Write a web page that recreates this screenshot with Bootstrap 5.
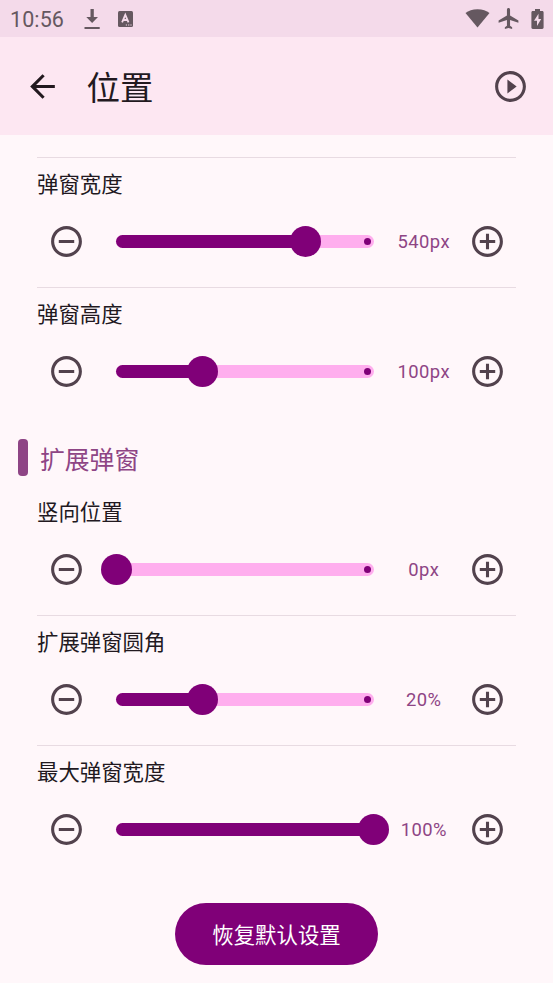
<!DOCTYPE html>
<html lang="zh-CN">
<head>
<meta charset="utf-8">
<meta name="viewport" content="width=device-width, initial-scale=1">
<title>位置</title>
<link href="https://cdn.jsdelivr.net/npm/bootstrap@5.3.0/dist/css/bootstrap.min.css" rel="stylesheet">
<style>
  :root { --plum: #800078; --mauve: #8e4585; --ink: #22191f; --icon: #52424d; }
  body { background: #fff7fa; color: var(--ink); font-family: Roboto, "Noto Sans CJK SC", sans-serif; min-height: 983px; overflow: hidden; }
  svg { display: block; flex: none; }
  .status-bar { height: 37px; background: #f4daea; color: #655860; font-size: 21.5px; line-height: 37px; padding: 0 9px 0 10px; }
  .status-time { width: 72px; letter-spacing: .1px; padding-top: 1px; }
  .status-plane { margin: 0 10px 0 6px; }
  .app-bar { height: 98px; background: #fde7f2; padding: 0 24.5px 0 24px; }
  .app-title { font-size: 33.5px; line-height: 40px; font-weight: 400; margin: 5px 0 0 25.5px; }
  .settings { padding: 22px 37px 0; }
  .setting { height: 130px; padding-top: 13px; }
  .setting.ruled { border-top: 1px solid #e8dbe2; padding-top: 12px; }
  .setting-label { font-size: 21.4px; line-height: 30px; height: 30px; }
  .setting-controls { margin-top: 23px; padding: 0 10.5px 0 11px; height: 37px; }
  .icon-action { border: 0; background: none; padding: 0; color: var(--icon); }
  .icon-action.app-back { color: var(--ink); }
  .track { width: 258px; height: 13px; margin-left: 31px; border-radius: 7px; background: #ffaeee; flex: none; }
  .track-fill { height: 13px; border-radius: 7px; background: var(--plum); }
  .track-thumb { position: absolute; top: -9px; width: 31px; height: 31px; margin-left: -15.5px; border-radius: 50%; background: var(--plum); }
  .track-stop { position: absolute; right: 3px; top: 3px; width: 7px; height: 7px; border-radius: 50%; background: var(--plum); }
  .setting-value { flex: 1; padding: 1px 0 0 5px; font-size: 18.4px; line-height: 28px; letter-spacing: .4px; color: var(--mauve); }
  .section-head { height: 37px; margin: 22px 0 8.5px -19px; color: var(--mauve); font-size: 24.8px; line-height: 37px; }
  .section-mark { width: 10px; height: 37px; margin-right: 12px; border-radius: 4px; background: var(--mauve); }
  .section-title { padding-top: 5px; }
  .reset-btn { width: 203px; height: 62px; margin-top: 28px; background: var(--plum); color: #fff; font-size: 21.4px; line-height: 30px; padding: 4px 0 0; }
  .reset-btn:hover { background: var(--plum); color: #fff; }
</style>
</head>
<body>
<svg width="0" height="0" class="position-absolute" aria-hidden="true">
  <symbol id="ring-minus" viewBox="0 0 24 24"><path fill="currentColor" d="M7 11v2h10v-2H7zm5-9C6.480 2 2 6.480 2 12s4.480 10 10 10 10-4.480 10-10S17.520 2 12 2zm0 18c-4.410 0-8-3.590-8-8s3.590-8 8-8 8 3.590 8 8-3.590 8-8 8z"/></symbol>
  <symbol id="ring-plus" viewBox="0 0 24 24"><path fill="currentColor" d="M13 7h-2v4H7v2h4v4h2v-4h4v-2h-4V7zm-1-5C6.480 2 2 6.480 2 12s4.480 10 10 10 10-4.480 10-10S17.520 2 12 2zm0 18c-4.410 0-8-3.590-8-8s3.590-8 8-8 8 3.590 8 8-3.590 8-8 8z"/></symbol>
</svg>

<div class="status-bar d-flex align-items-center">
  <span class="status-time">10:56</span>
  <svg width="20" height="22" viewBox="0 0 20 22" fill="currentColor"><path d="M8.500 1h3.300v8h4.200L10.100 15 4.300 9h4.200zM2.500 19h15.200v2H2.500z"/></svg>
  <svg class="ms-3" width="15" height="16" viewBox="0 0 15 16"><rect width="15" height="16" rx="1.500" fill="currentColor"/><path d="M4.100 11.400L7.300 3.900l3.200 7.500M5.400 9h3.800" fill="none" stroke="#f4daea" stroke-width="1.800"/><path d="M7.800 14h1.200M10.100 14h1.200M12.400 14h1.200" stroke="#f4daea" stroke-width="1.200"/></svg>
  <svg class="ms-auto" width="25" height="19" viewBox="0 0 25 19"><path fill="currentColor" d="M12.500 18.500L.5 4C3.500 1.600 7.500.2 12.500.2S21.500 1.600 24.500 4z"/></svg>
  <svg class="status-plane" width="25" height="25" viewBox="0 0 24 24"><path fill="currentColor" d="M21.500 16v-2l-8-5V3.500c0-.83-.67-1.500-1.500-1.500s-1.500.67-1.500 1.500V9l-8 5v2l8-2.500V19l-2 1.500V22l3.500-1 3.500 1v-1.500L13.500 19v-5.500z"/></svg>
  <svg width="13" height="20" viewBox="0 0 13 20"><path fill="currentColor" d="M4 0h5v2h2.200c.8 0 1.400.6 1.400 1.400v15.200c0 .8-.6 1.400-1.400 1.400H1.800C1 20 .4 19.400.4 18.600V3.400C.4 2.600 1 2 1.800 2H4z"/><path fill="#f4daea" d="M7.500 4.800L3 11.700h3V17l4.200-7H7.500z"/></svg>
</div>

<header class="app-bar d-flex align-items-center">
  <button class="icon-action app-back" aria-label="返回"><svg width="37" height="37" viewBox="0 0 24 24"><path fill="currentColor" d="M20 11H7.830l5.590-5.590L12 4l-8 8 8 8 1.410-1.410L7.830 13H20v-2z"/></svg></button>
  <h1 class="app-title">位置</h1>
  <button class="icon-action ms-auto" aria-label="播放"><svg width="37" height="37" viewBox="0 0 24 24"><path fill="currentColor" d="M10 16.500l6-4.500-6-4.500v9zM12 2C6.480 2 2 6.480 2 12s4.480 10 10 10 10-4.480 10-10S17.520 2 12 2zm0 18c-4.410 0-8-3.590-8-8s3.590-8 8-8 8 3.590 8 8-3.590 8-8 8z"/></svg></button>
</header>

<main class="settings">
  <section class="setting ruled">
    <div class="setting-label">弹窗宽度</div>
    <div class="setting-controls d-flex align-items-center">
      <button class="icon-action"><svg width="37" height="37"><use href="#ring-minus"/></svg></button>
      <div class="track position-relative"><div class="track-fill" style="width:73.3%"></div><span class="track-stop"></span><span class="track-thumb" style="left:73.3%"></span></div>
      <span class="setting-value text-center">540px</span>
      <button class="icon-action"><svg width="37" height="37"><use href="#ring-plus"/></svg></button>
    </div>
  </section>
  <section class="setting ruled">
    <div class="setting-label">弹窗高度</div>
    <div class="setting-controls d-flex align-items-center">
      <button class="icon-action"><svg width="37" height="37"><use href="#ring-minus"/></svg></button>
      <div class="track position-relative"><div class="track-fill" style="width:33.5%"></div><span class="track-stop"></span><span class="track-thumb" style="left:33.5%"></span></div>
      <span class="setting-value text-center">100px</span>
      <button class="icon-action"><svg width="37" height="37"><use href="#ring-plus"/></svg></button>
    </div>
  </section>

  <div class="section-head d-flex align-items-center"><span class="section-mark"></span><span class="section-title">扩展弹窗</span></div>

  <section class="setting">
    <div class="setting-label">竖向位置</div>
    <div class="setting-controls d-flex align-items-center">
      <button class="icon-action"><svg width="37" height="37"><use href="#ring-minus"/></svg></button>
      <div class="track position-relative"><span class="track-stop"></span><span class="track-thumb" style="left:0%"></span></div>
      <span class="setting-value text-center">0px</span>
      <button class="icon-action"><svg width="37" height="37"><use href="#ring-plus"/></svg></button>
    </div>
  </section>
  <section class="setting ruled">
    <div class="setting-label">扩展弹窗圆角</div>
    <div class="setting-controls d-flex align-items-center">
      <button class="icon-action"><svg width="37" height="37"><use href="#ring-minus"/></svg></button>
      <div class="track position-relative"><div class="track-fill" style="width:33.5%"></div><span class="track-stop"></span><span class="track-thumb" style="left:33.5%"></span></div>
      <span class="setting-value text-center">20%</span>
      <button class="icon-action"><svg width="37" height="37"><use href="#ring-plus"/></svg></button>
    </div>
  </section>
  <section class="setting ruled">
    <div class="setting-label">最大弹窗宽度</div>
    <div class="setting-controls d-flex align-items-center">
      <button class="icon-action"><svg width="37" height="37"><use href="#ring-minus"/></svg></button>
      <div class="track position-relative"><div class="track-fill" style="width:99.8%"></div><span class="track-thumb" style="left:99.8%"></span></div>
      <span class="setting-value text-center">100%</span>
      <button class="icon-action"><svg width="37" height="37"><use href="#ring-plus"/></svg></button>
    </div>
  </section>

  <div class="d-flex justify-content-center"><button class="btn reset-btn rounded-pill border-0">恢复默认设置</button></div>
</main>
<script src="https://cdn.jsdelivr.net/npm/bootstrap@5.3.0/dist/js/bootstrap.bundle.min.js"></script>
</body>
</html>
